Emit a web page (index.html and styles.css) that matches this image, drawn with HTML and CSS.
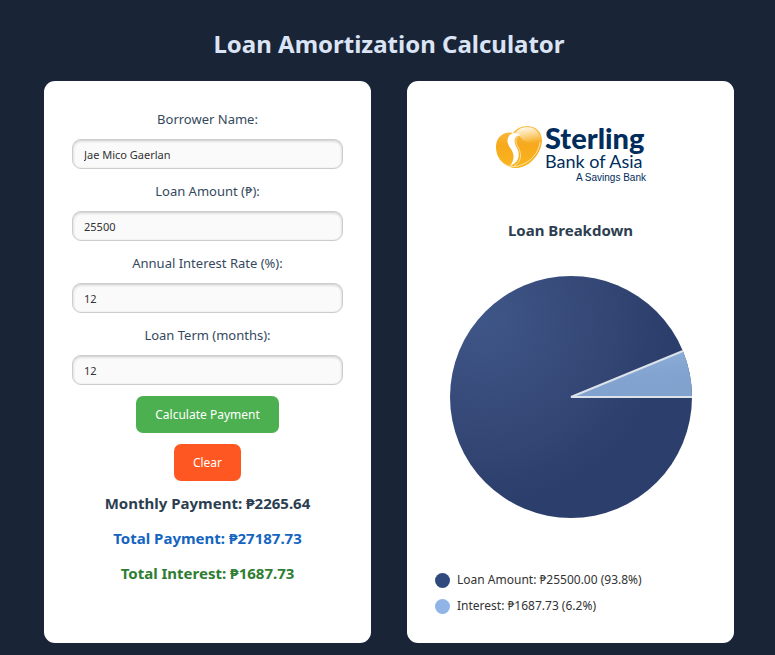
FILE: index.html
```html
<!DOCTYPE html>
<html lang="en">
<head>
<meta charset="utf-8">
<meta name="viewport" content="width=device-width, initial-scale=1">
<title>Loan Amortization Calculator</title>
<link rel="stylesheet" href="styles.css">
</head>
<body>
<h1>Loan Amortization Calculator</h1>
<main class="panels">
  <form class="card form">
    <div class="fields">
      <div class="field">
        <label for="name">Borrower Name:</label>
        <input id="name" type="text" value="Jae Mico Gaerlan">
      </div>
      <div class="field">
        <label for="amount">Loan Amount (₱):</label>
        <input id="amount" type="text" inputmode="decimal" value="25500">
      </div>
      <div class="field">
        <label for="rate">Annual Interest Rate (%):</label>
        <input id="rate" type="text" inputmode="decimal" value="12">
      </div>
      <div class="field">
        <label for="term">Loan Term (months):</label>
        <input id="term" type="text" inputmode="numeric" value="12">
      </div>
    </div>
    <button class="button calculate" type="button">Calculate Payment</button>
    <button class="button clear" type="reset">Clear</button>
    <div class="results">
      <p class="monthly">Monthly Payment: ₱2265.64</p>
      <p class="total">Total Payment: ₱27187.73</p>
      <p class="interest">Total Interest: ₱1687.73</p>
    </div>
  </form>
  <section class="card breakdown">
    <svg class="logo" viewBox="0 0 152 60" role="img" aria-label="Sterling Bank of Asia, A Savings Bank">
      <defs>
        <linearGradient id="gold" x1="0" y1="0" x2="0" y2="1">
          <stop offset="0" stop-color="#f9c04a"/>
          <stop offset="0.45" stop-color="#f6a91c"/>
          <stop offset="1" stop-color="#fab51e"/>
        </linearGradient>
        <linearGradient id="shine" x1="0.3" y1="0" x2="0.6" y2="1">
          <stop offset="0" stop-color="#fffaf0"/>
          <stop offset="0.5" stop-color="#fbd78c"/>
          <stop offset="1" stop-color="#f7ac22"/>
        </linearGradient>
      </defs>
      <path d="M18 9C9 7 1 13 1 23C1 35 10 44 22 44C35 43 46 30 47 17C47 7 40 2 32 2C26 2 21 5 18 9Z" fill="url(#gold)"/>
      <path d="M20 9C23 5 27 3 32 3C40 3 46 9 46 17C42 20 33 21 26 14C24 11 22 9 20 9Z" fill="url(#shine)"/>
      <path d="M18 9C11 12 11 19 16 25C20 31 19 37 15 42C23 39 26 32 22 24C18 17 19 12 25 11C23 9 21 9 18 9Z" fill="#fff"/>
      <path d="M25 11C20 13 20 18 23 23C28 32 25 39 19 42" fill="none" stroke="#fff" stroke-opacity="0.700" stroke-width="0.800"/>
      <path d="M3 33C7 41 15 44 23 42C35 39 44 29 45 18" fill="none" stroke="#fff0cc" stroke-width="0.800"/>
      <text class="logo-name" x="50" y="25">Sterling</text>
      <text class="logo-bank" x="50" y="44">Bank of Asia</text>
      <text class="logo-tag" x="151" y="57">A Savings Bank</text>
    </svg>
    <h2>Loan Breakdown</h2>
    <svg class="pie" viewBox="0 0 244 244" role="img" aria-label="Loan amount 93.8%, interest 6.2%">
      <defs>
        <radialGradient id="navy" gradientUnits="userSpaceOnUse" cx="35" cy="45" r="230">
          <stop offset="0" stop-color="#3e5687"/>
          <stop offset="0.35" stop-color="#384c7b"/>
          <stop offset="0.8" stop-color="#2c3e6b"/>
          <stop offset="1" stop-color="#2c3e6b"/>
        </radialGradient>
        <linearGradient id="sky" x1="0.3" y1="0" x2="0.6" y2="1">
          <stop offset="0" stop-color="#8fb0da"/>
          <stop offset="0.6" stop-color="#82a3cf"/>
          <stop offset="1" stop-color="#80a2cd"/>
        </linearGradient>
      </defs>
      <circle cx="122" cy="122" r="121" fill="url(#navy)"/>
      <path d="M122 122L233.900 76A121 121 0 0 1 243 122Z" fill="url(#sky)"/>
      <path d="M233.900 76L122 122H243" fill="none" stroke="#dce2ea" stroke-width="2"/>
    </svg>
    <ul class="legend">
      <li><span class="dot dot-loan"></span>Loan Amount: ₱25500.00 (93.8%)</li>
      <li><span class="dot dot-interest"></span>Interest: ₱1687.73 (6.2%)</li>
    </ul>
  </section>
</main>
</body>
</html>
```
FILE: styles.css
```css
* {
  box-sizing: border-box;
}

body {
  margin: 0;
  padding: 27px 41px 12px 44px;
  background: #1a2437;
  color: #2c3e50;
  font-family: "Noto Sans", "Open Sans", sans-serif;
}

h1 {
  margin: 0 0 20px;
  color: #dbe4f5;
  font-size: 24px;
  line-height: 34px;
  text-align: center;
}

h2 {
  margin: 0;
  font-size: 15px;
  line-height: 22px;
}

.panels {
  display: grid;
  grid-template-columns: 1fr 1fr;
  gap: 36px;
}

.card {
  display: flex;
  flex-direction: column;
  align-items: center;
  padding: 28px 28px 27px;
  border-radius: 11px;
  background: #fff;
}

.form {
  gap: 11px;
}

.fields {
  display: flex;
  flex-direction: column;
  gap: 12px;
  width: 100%;
}

.field {
  display: flex;
  flex-direction: column;
  gap: 10px;
}

.field label {
  color: #34495e;
  font-size: 13px;
  line-height: 20px;
  text-align: center;
}

.field input {
  width: 100%;
  height: 30px;
  padding: 0 11px;
  border: 1px solid #ccc;
  border-radius: 9px;
  background: #fafafa;
  box-shadow: inset 0 1px 3px rgba(0, 0, 0, 0.2);
  color: #333;
  font-family: inherit;
  font-size: 11px;
}

.button {
  height: 37px;
  padding: 0 19px;
  border: 0;
  border-radius: 7px;
  color: #fff;
  font-family: inherit;
  font-size: 12px;
}

.calculate {
  background: #4caf50;
}

.clear {
  background: #ff5722;
}

.results {
  display: flex;
  flex-direction: column;
  gap: 13px;
  font-size: 15px;
  font-weight: 700;
  line-height: 22px;
  text-align: center;
}

.results p {
  margin: 0;
}

.total {
  color: #1565c0;
}

.interest {
  color: #2e7d32;
}

.breakdown {
  padding-top: 43px;
}

.logo {
  width: 152px;
  height: 60px;
  margin-bottom: 35px;
  overflow: visible;
}

.logo text {
  fill: #002d5c;
}

.logo-name {
  font-family: Lato, sans-serif;
  font-size: 29px;
  font-weight: 900;
}

.logo-bank {
  font-family: Lato, sans-serif;
  font-size: 18px;
}

.logo-tag {
  font-family: "Liberation Sans", sans-serif;
  font-size: 10px;
  text-anchor: end;
}

.pie {
  width: 100%;
  max-width: 244px;
  margin: 34px 0 51px;
}

.legend {
  display: flex;
  flex-direction: column;
  gap: 6px;
  align-self: stretch;
  margin: 0;
  padding: 0;
  color: #333;
  font-size: 12px;
  line-height: 20px;
  list-style: none;
}

.legend li {
  display: flex;
  align-items: center;
  gap: 7px;
}

.dot {
  flex: none;
  width: 15px;
  height: 15px;
  border-radius: 50%;
}

.dot-loan {
  background: #304a7d;
}

.dot-interest {
  background: #90b4e6;
}
```
